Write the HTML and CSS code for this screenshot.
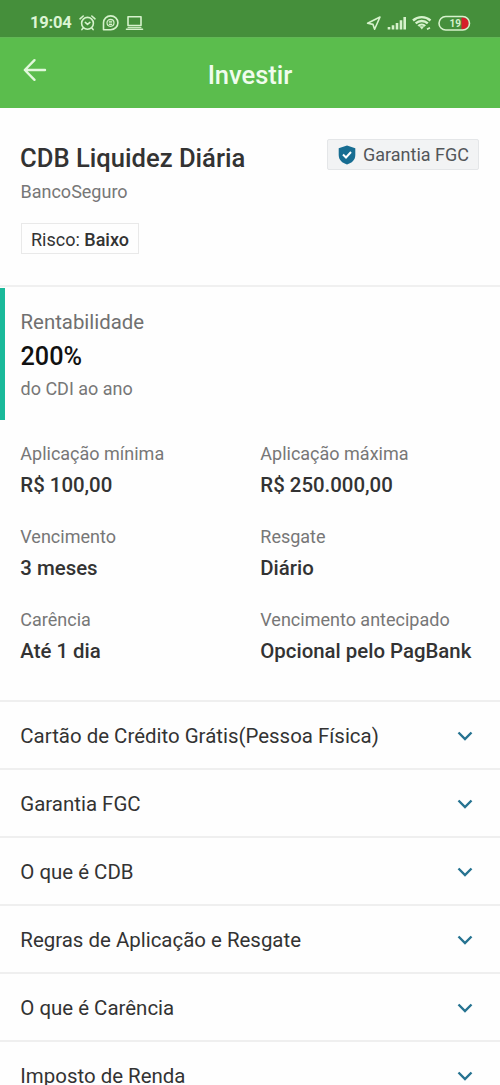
FILE: index.html
```html
<!DOCTYPE html>
<html lang="pt-BR">
<head>
<meta charset="utf-8">
<title>Investir</title>
<link rel="stylesheet" href="styles.css">
</head>
<body>
<div class="screen">
  <div class="status">
    <span class="time">19:04</span>
    <svg class="st-left" width="66" height="18" viewBox="0 0 66 18" fill="none" stroke="#d6f2cc" stroke-width="1.6" stroke-linecap="round" stroke-linejoin="round">
      <circle cx="9.500" cy="9.300" r="5.900"/><path d="M2 4.800 5.200 2M17 4.800 13.800 2M5.200 14l-1.300 1.600M13.800 14l1.300 1.600M7.300 8.400l2.200 1.900 2.400-1.900"/>
      <path d="M25.500 15.700V8.800a7.200 6.900 0 1 1 7.200 6.900z"/><circle cx="32.500" cy="8.800" r="3.500" stroke-width="1.200"/><path d="M31.200 7.300h2.600M31.200 8.900h2.600M31.200 10.500h2.600" stroke-width="1"/>
      <path d="M50 2.800h13v8.700H50zM48.500 15.300h16"/><path d="M50 13.400h13" stroke-width="1"/>
    </svg>
    <svg class="st-right" width="106" height="18" viewBox="0 0 106 18" fill="none" stroke="#d6f2cc" stroke-width="1.600" stroke-linejoin="round">
      <path d="M1.600 9.200 14 3 8.600 15.200 7 10.400z"/>
      <path d="M23 13v2.500M27 11.300v4.200M31 9v6.500M35 6.300v9.200M38.700 3v12.500" stroke-width="2.600"/>
      <path d="M47 6.500a13 13 0 0 1 17.500 0M49.700 9.400a9 9 0 0 1 12.100 0M52.300 12a5 5 0 0 1 6.900 0" stroke-width="2.400"/><path d="M53.300 12.200h5l-2.500 3.300z" fill="#d6f2cc" stroke="none"/><path d="M61 15.200l3-1.500"/>
      <path d="M95.500 3.500h1.500a5.500 5.500 0 0 1 0 12h-1.500z" fill="#d51f2a" stroke="none"/>
      <rect x="73" y="2.500" width="30.500" height="13.500" rx="6.750"/>
      <text class="battery" x="83.500" y="13">19</text>
    </svg>
  </div>
  <header class="appbar">
    <svg class="back" width="24" height="24" viewBox="0 0 24 24" fill="none" stroke="#e2f8dc" stroke-width="2.400" stroke-linecap="round" stroke-linejoin="round"><path d="M22 12H2M11.500 2.200 1.800 12l9.700 9.800"/></svg>
    <h1 class="heading">Investir</h1>
  </header>
  <section class="product">
    <div class="product-top">
      <h2 class="name">CDB Liquidez Diária</h2>
      <div class="badge">
        <svg width="18" height="20" viewBox="0 0 18 20"><path d="M9 .5 17.300 3.300V10c0 5-3.500 8-8.300 9.500C4.200 18 .7 15 .7 10V3.300z" fill="#176d92"/><path d="M5 9.500l3 3 5-5.500" fill="none" stroke="#fff" stroke-width="2"/></svg>
        <span class="badge-text">Garantia FGC</span>
      </div>
    </div>
    <p class="issuer">BancoSeguro</p>
    <div class="risk"><span>Risco: <b>Baixo</b></span></div>
  </section>
  <section class="yield">
    <p class="yield-label">Rentabilidade</p>
    <p class="yield-value">200%</p>
    <p class="yield-note">do CDI ao ano</p>
  </section>
  <dl class="facts">
    <div><dt>Aplicação mínima</dt><dd>R$ 100,00</dd></div>
    <div><dt>Aplicação máxima</dt><dd>R$ 250.000,00</dd></div>
    <div><dt>Vencimento</dt><dd>3 meses</dd></div>
    <div><dt>Resgate</dt><dd>Diário</dd></div>
    <div><dt>Carência</dt><dd>Até 1 dia</dd></div>
    <div><dt>Vencimento antecipado</dt><dd>Opcional pelo PagBank</dd></div>
  </dl>
  <ul class="topics">
    <li><span>Cartão de Crédito Grátis(Pessoa Física)</span><svg class="chev" viewBox="0 0 16 10"><path d="M1.500 1.500 8 8l6.500-6.500"/></svg></li>
    <li><span>Garantia FGC</span><svg class="chev" viewBox="0 0 16 10"><path d="M1.500 1.500 8 8l6.500-6.500"/></svg></li>
    <li><span>O que é CDB</span><svg class="chev" viewBox="0 0 16 10"><path d="M1.500 1.500 8 8l6.500-6.500"/></svg></li>
    <li><span>Regras de Aplicação e Resgate</span><svg class="chev" viewBox="0 0 16 10"><path d="M1.500 1.500 8 8l6.500-6.500"/></svg></li>
    <li><span>O que é Carência</span><svg class="chev" viewBox="0 0 16 10"><path d="M1.500 1.500 8 8l6.500-6.500"/></svg></li>
    <li><span>Imposto de Renda</span><svg class="chev" viewBox="0 0 16 10"><path d="M1.500 1.500 8 8l6.500-6.500"/></svg></li>
  </ul>
</div>
</body>
</html>
```
FILE: styles.css
```css
* { box-sizing: border-box; margin: 0; padding: 0; }
body { background: #fefefe; font-family: Roboto, sans-serif; color: #333; }
.screen { width: 500px; height: 1085px; overflow: hidden; }
svg { display: block; flex: none; }

.status { height: 37px; background: #458f3b; display: flex; align-items: center; padding: 9px 28px 0 30px; }
.time { font-size: 16.5px; line-height: 20px; font-weight: 700; color: #dcf5d4; width: 48px; letter-spacing: -0.2px; }
.st-right { margin-left: auto; }
.battery { font: 700 10px Roboto, sans-serif; fill: #d6f2cc; stroke: none; }

.appbar { height: 71px; background: #5bbd4d; border-top: 1px solid #62b756; display: grid; grid-template-columns: 56px 1fr 56px; }
.back { margin: 20px 0 0 23px; }
.heading { font-size: 25.5px; line-height: 30px; font-weight: 500; color: #f0fced; text-align: center; padding-top: 22px; }

.product { height: 179px; padding: 31px 21px 0; border-bottom: 2px solid #f0f0f0; }
.product-top { display: flex; justify-content: space-between; height: 40px; }
.name { font-size: 25.6px; line-height: 38px; font-weight: 500; margin-left: -1px; }
.badge { display: flex; align-items: center; gap: 7px; width: 152px; height: 31px; padding-left: 10px; background: #f2f3f4; border: 1px solid #e4e6e8; border-radius: 2px; }
.badge-text { font-size: 18px; color: #525659; white-space: nowrap; }
.issuer { font-size: 18px; line-height: 26px; color: #777; margin-left: -0.5px; }
.risk { width: 118px; height: 31px; margin-top: 18px; padding-left: 9px; border: 1px solid #e9e9e9; font-size: 18px; line-height: 31px; white-space: nowrap; }
.risk b { font-weight: 500; }

.yield { height: 132px; margin-top: 1px; padding: 21px 0 0 15.5px; border-left: 5px solid #1ab99a; }
.yield-label { font-size: 20.4px; line-height: 27px; color: #707070; }
.yield-value { font-size: 25.2px; line-height: 41px; font-weight: 500; color: #111; }
.yield-note { font-size: 18px; line-height: 24px; color: #777; }

.facts { display: grid; grid-template-columns: 240px 1fr; grid-auto-rows: 83px; padding: 20px 0 0 20.3px; height: 279.5px; white-space: nowrap; }
.facts dt { font-size: 18px; line-height: 28px; color: #777; }
.facts dd { font-size: 20.4px; line-height: 35px; font-weight: 500; }

.topics { list-style: none; }
.topics li { height: 68.1px; border-top: 2px solid #efefef; display: flex; align-items: center; justify-content: space-between; padding: 2px 27px 0 20.3px; font-size: 20.45px; }
.chev { width: 16px; height: 10px; fill: none; stroke: #267391; stroke-width: 2.4; }
```
